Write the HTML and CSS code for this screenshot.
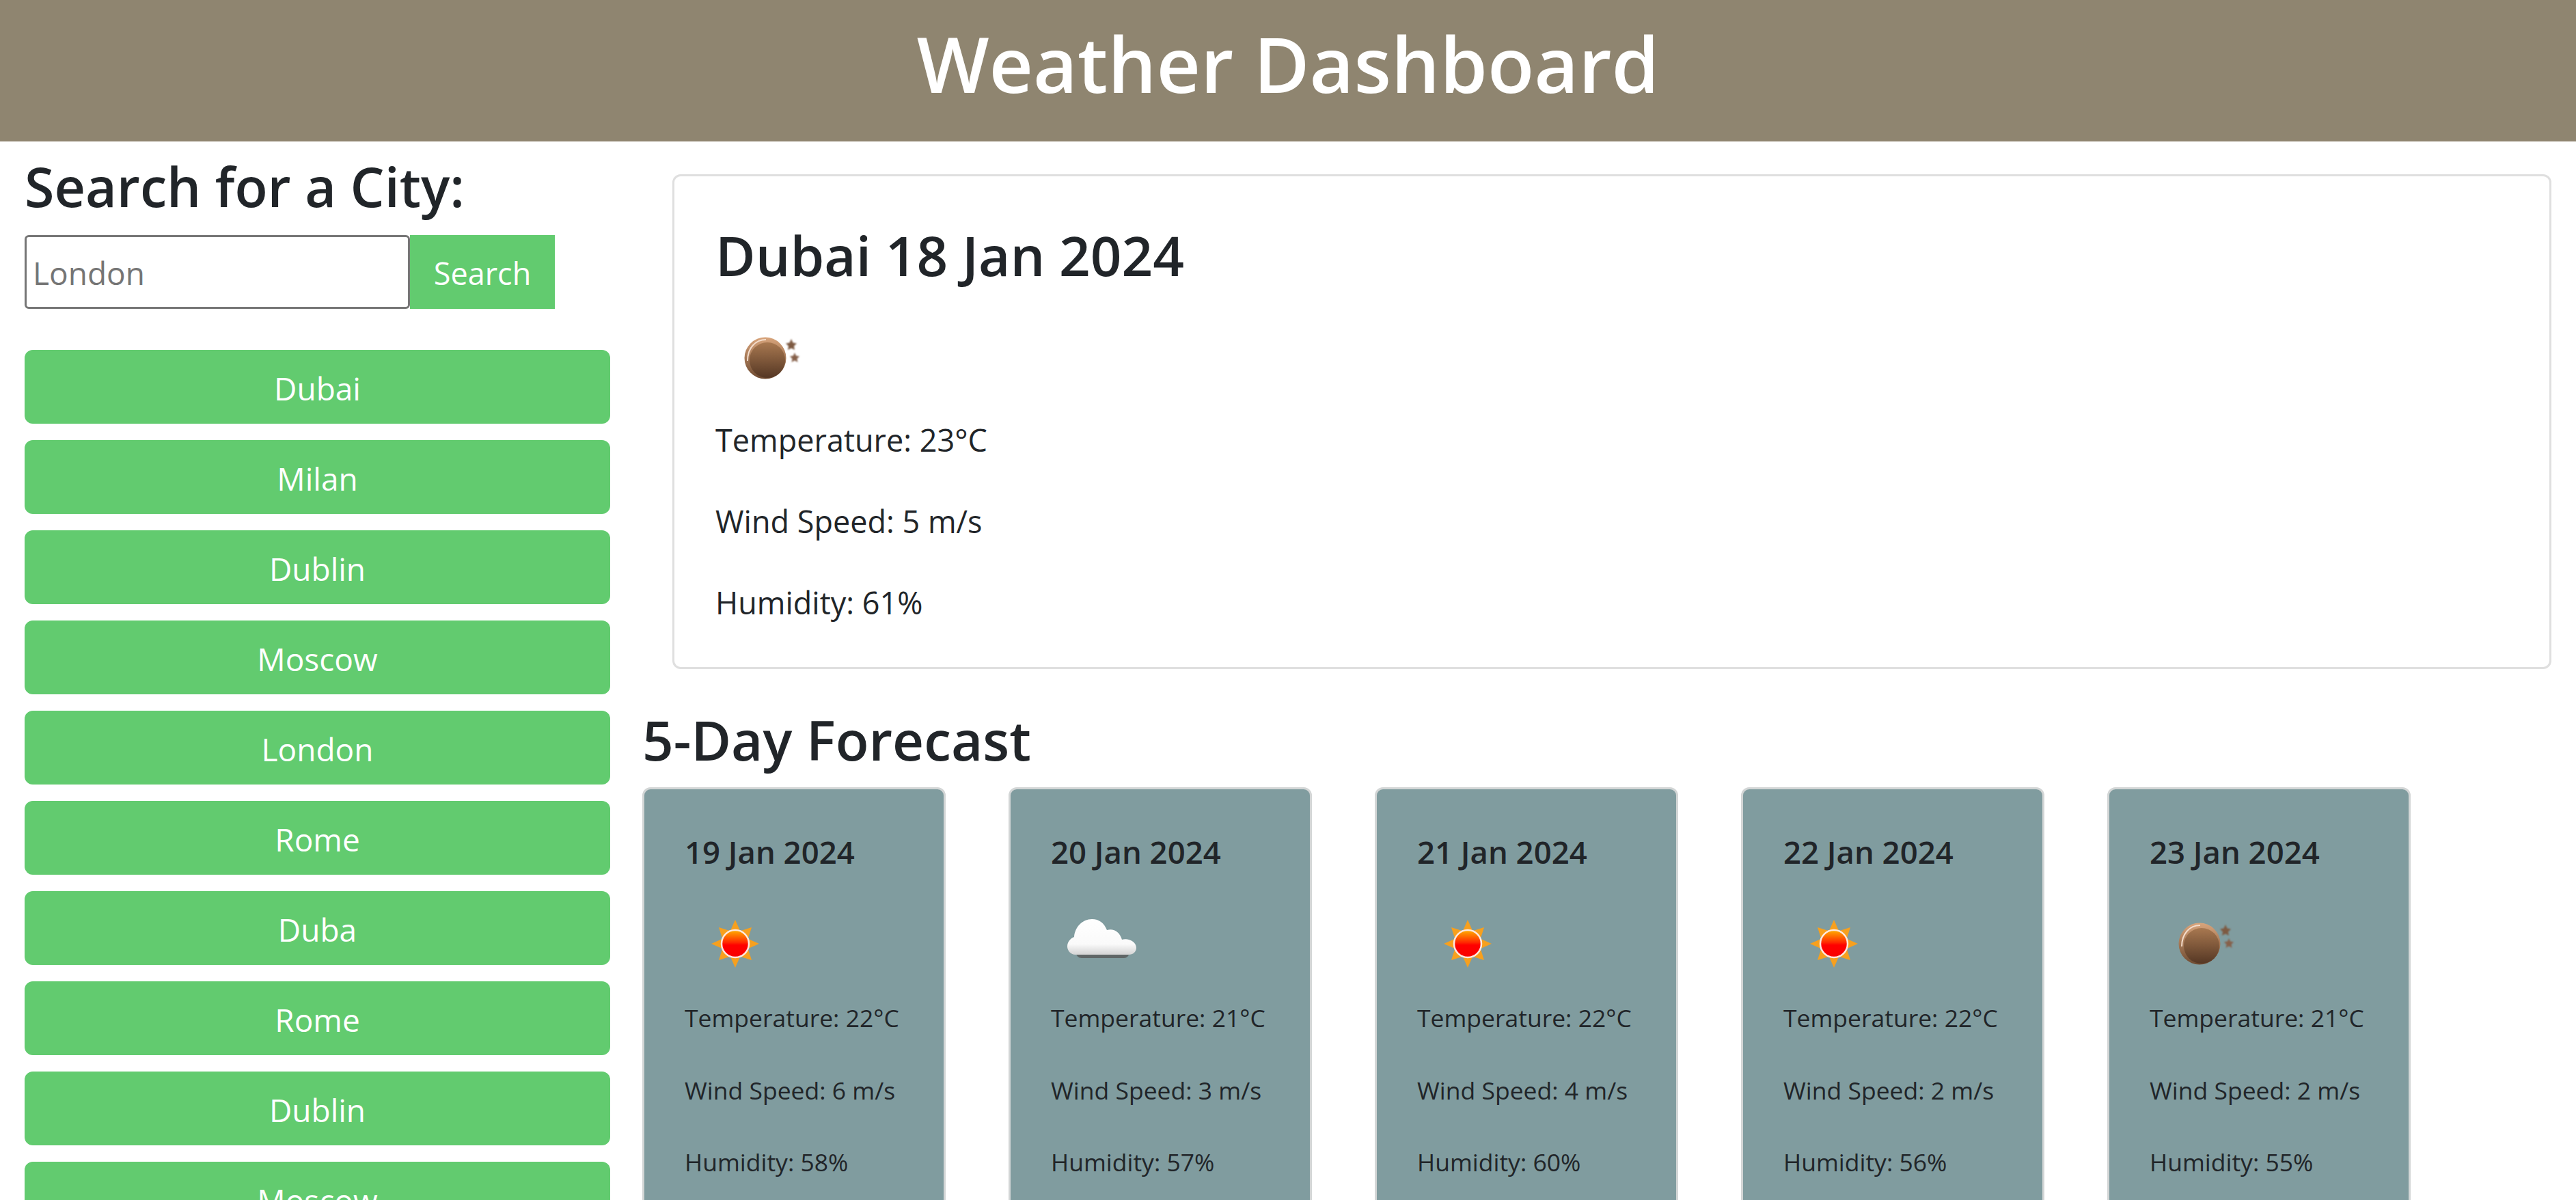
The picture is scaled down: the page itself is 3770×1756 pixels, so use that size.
FILE: index.html
```html
<!DOCTYPE html>
<html lang="en">
<head>
    <meta charset="UTF-8">
    <meta name="viewport" content="width=device-width, initial-scale=1.0">
    <title>Weather Dashboard</title>
    <link rel="stylesheet" href="styles.css">
</head>
<body>
    <svg class="icon-defs" aria-hidden="true">
        <defs>
            <linearGradient id="sunFill" x1="0" y1="0" x2="0" y2="1">
                <stop offset="0" stop-color="#ffb000"/>
                <stop offset="0.45" stop-color="#ff2a00"/>
                <stop offset="0.55" stop-color="#ff0000"/>
                <stop offset="1" stop-color="#f80000"/>
            </linearGradient>
            <linearGradient id="ballFill" x1="0" y1="0" x2="0" y2="1">
                <stop offset="0" stop-color="#a87850"/>
                <stop offset="1" stop-color="#553724"/>
            </linearGradient>
            <linearGradient id="ballRim" x1="0" y1="0" x2="0" y2="1">
                <stop offset="0" stop-color="#d9a57c"/>
                <stop offset="1" stop-color="#6e4a30"/>
            </linearGradient>
            <linearGradient id="cloudFill" x1="0" y1="0" x2="0" y2="1">
                <stop offset="0" stop-color="#ffffff"/>
                <stop offset="0.7" stop-color="#fafafa"/>
                <stop offset="1" stop-color="#d4d4d4"/>
            </linearGradient>
            <symbol id="iconSun" viewBox="0 0 130 120">
                <g class="soft" fill="#f7a01e">
                    <polygon points="74,25 82,43 66,43"/>
                    <polygon points="74,95 82,77 66,77"/>
                    <polygon points="39,60 57,52 57,68"/>
                    <polygon points="109,60 91,52 91,68"/>
                    <polygon points="50,36 69,42 56,55"/>
                    <polygon points="98,36 92,55 79,42"/>
                    <polygon points="50,84 56,65 69,78"/>
                    <polygon points="98,84 79,78 92,65"/>
                </g>
                <circle class="soft" cx="74" cy="60" r="20" fill="url(#sunFill)" stroke="#ffe9e0" stroke-width="2.5"/>
            </symbol>
            <symbol id="iconBall" viewBox="0 0 130 120">
                <g class="soft">
                    <circle cx="73" cy="60" r="30.5" fill="url(#ballRim)"/>
                    <path d="M47 64 C47 46 58 33 74 33" fill="none" stroke="#f3dccb" stroke-width="2"/>
                    <circle cx="76" cy="63" r="26" fill="url(#ballFill)"/>
                </g>
                <g class="hazy">
                    <polygon fill="#7d5a42" points="111,32 113.5,37.5 119,38.5 115,42.5 116,48 111,45.5 106,48 107,42.5 103,38.5 108.5,37.5"/>
                    <polygon fill="#86604a" points="116,52 118,56.5 123,57.5 119.5,61 120.5,66 116,63.5 111.5,66 112.5,61 109,57.5 114,56.5"/>
                </g>
            </symbol>
            <symbol id="iconCloud" viewBox="0 0 130 120">
                <g class="soft">
                    <path d="M36 72 H116 Q113 81 107 81 H45 Q38 81 36 72 Z" fill="#5f6666"/>
                    <path d="M36 76 C28 76 24 69 24 64 C24 57 29 52 34 50 C35 36 46 24 60 24 C71 24 78 30 82 40 C92 37 101 43 104 54 C112 51 125 56 125 66 C125 72 120 76 114 76 Z" fill="url(#cloudFill)"/>
                </g>
            </symbol>
        </defs>
    </svg>

    <header class="site-header">
        <h1>Weather Dashboard</h1>
    </header>

    <div class="layout">
        <aside class="sidebar">
            <h3 class="search-title">Search for a City:</h3>
            <form class="search-form">
                <input type="text" class="search-input" placeholder="London">
                <button type="button" class="search-btn">Search</button>
            </form>
            <div class="history">
                <button type="button" class="city-btn">Dubai</button>
                <button type="button" class="city-btn">Milan</button>
                <button type="button" class="city-btn">Dublin</button>
                <button type="button" class="city-btn">Moscow</button>
                <button type="button" class="city-btn">London</button>
                <button type="button" class="city-btn">Rome</button>
                <button type="button" class="city-btn">Duba</button>
                <button type="button" class="city-btn">Rome</button>
                <button type="button" class="city-btn">Dublin</button>
                <button type="button" class="city-btn">Moscow</button>
            </div>
        </aside>

        <main class="content">
            <section class="today">
                <h3 class="today-title">Dubai 18 Jan 2024</h3>
                <svg class="icon"><use href="#iconBall"/></svg>
                <p>Temperature: 23°C</p>
                <p>Wind Speed: 5 m/s</p>
                <p>Humidity: 61%</p>
            </section>

            <h3 class="forecast-title">5-Day Forecast</h3>
            <div class="forecast">
                <article class="day">
                    <h6>19 Jan 2024</h6>
                    <svg class="icon"><use href="#iconSun"/></svg>
                    <p>Temperature: 22°C</p>
                    <p>Wind Speed: 6 m/s</p>
                    <p>Humidity: 58%</p>
                </article>
                <article class="day">
                    <h6>20 Jan 2024</h6>
                    <svg class="icon"><use href="#iconCloud"/></svg>
                    <p>Temperature: 21°C</p>
                    <p>Wind Speed: 3 m/s</p>
                    <p>Humidity: 57%</p>
                </article>
                <article class="day">
                    <h6>21 Jan 2024</h6>
                    <svg class="icon"><use href="#iconSun"/></svg>
                    <p>Temperature: 22°C</p>
                    <p>Wind Speed: 4 m/s</p>
                    <p>Humidity: 60%</p>
                </article>
                <article class="day">
                    <h6>22 Jan 2024</h6>
                    <svg class="icon"><use href="#iconSun"/></svg>
                    <p>Temperature: 22°C</p>
                    <p>Wind Speed: 2 m/s</p>
                    <p>Humidity: 56%</p>
                </article>
                <article class="day">
                    <h6>23 Jan 2024</h6>
                    <svg class="icon"><use href="#iconBall"/></svg>
                    <p>Temperature: 21°C</p>
                    <p>Wind Speed: 2 m/s</p>
                    <p>Humidity: 55%</p>
                </article>
            </div>
        </main>
    </div>
</body>
</html>
```

FILE: styles.css
```css
html, body {
    height: 100%;
    overflow: hidden;
}
body {
    margin: 0;
    font-family: "Open Sans", "Noto Sans", sans-serif;
    font-size: 48px;
    line-height: 1.5;
    color: #212529;
    background-color: #fff;
}
h1, h3, h6, p {
    margin: 0;
}
.icon-defs {
    display: block;
    width: 0;
    height: 0;
}
.soft {
    filter: blur(0.7px);
}
.hazy {
    filter: blur(1px);
}
.site-header {
    height: 207px;
    background-color: #8f8570;
    color: #fff;
    text-align: center;
}
.site-header h1 {
    font-size: 112px;
    font-weight: 600;
    line-height: 186px;
}
.layout {
    display: flex;
}
.sidebar {
    width: 893px;
    padding-left: 36px;
    flex: none;
    box-sizing: border-box;
}
.search-title {
    font-size: 79px;
    font-weight: 600;
    line-height: 100px;
    margin-top: 16px;
    margin-bottom: 21px;
}
.search-form {
    display: flex;
    margin-bottom: 60px;
}
.search-input {
    width: 564px;
    height: 108px;
    box-sizing: border-box;
    padding: 2px 9px 0;
    font: inherit;
    font-size: 46px;
    color: #757575;
    border: 3px solid #767676;
    border-radius: 6px;
}
.search-input::placeholder {
    color: #757575;
}
.search-btn {
    width: 212px;
    height: 108px;
    padding: 4px 0 0;
    font: inherit;
    font-size: 45px;
    color: #fff;
    background-color: #62cb6f;
    border: none;
}
.history {
    display: flex;
    flex-direction: column;
    gap: 24px;
}
.city-btn {
    height: 108px;
    padding: 5px 0 0;
    font: inherit;
    font-size: 46px;
    color: #fff;
    background-color: #62cb6f;
    border: none;
    border-radius: 12px;
}
.content {
    flex: 1;
    padding-left: 47px;
    padding-right: 36px;
}
.today {
    margin-top: 48px;
    margin-left: 44px;
    height: 724px;
    box-sizing: border-box;
    padding: 60px;
    border: 3px solid #dfdfdf;
    border-radius: 12px;
}
.today-title {
    font-size: 80px;
    font-weight: 600;
    line-height: 100px;
    margin-top: 5px;
    margin-bottom: 41px;
}
.today p {
    font-size: 45px;
    line-height: 72px;
    margin-bottom: 47px;
}
.icon {
    display: block;
    width: 130px;
    height: 120px;
    margin-bottom: 24px;
}
.forecast-title {
    font-size: 80px;
    font-weight: 600;
    line-height: 100px;
    margin-top: 53px;
    margin-bottom: 20px;
}
.forecast {
    display: flex;
    gap: 92px;
}
.day {
    width: 444px;
    height: 900px;
    flex: none;
    box-sizing: border-box;
    padding: 62px 59px;
    background-color: #809c9f;
    border: 3px solid #d3d6d6;
    border-radius: 12px;
}
.day h6 {
    font-size: 45.5px;
    font-weight: 600;
    line-height: 58px;
    margin-bottom: 46px;
}
.day .icon {
    margin-bottom: 19px;
}
.day p {
    font-size: 35.5px;
    line-height: 58px;
    margin-bottom: 47.6px;
    white-space: nowrap;
}
```
